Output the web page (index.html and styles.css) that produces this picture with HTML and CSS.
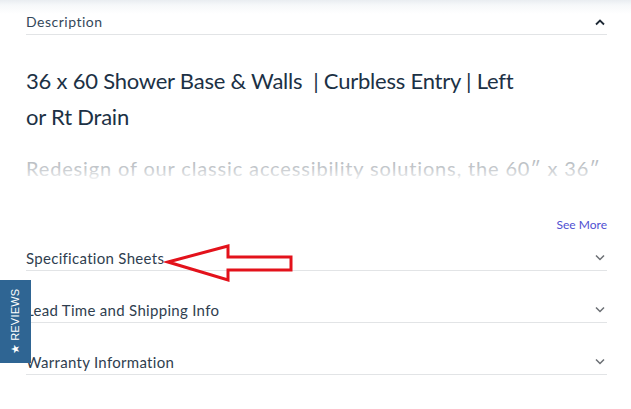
FILE: index.html
```html
<!DOCTYPE html>
<html lang="en">
<head>
<meta charset="utf-8">
<link rel="stylesheet" href="styles.css">
</head>
<body>
<div class="page">
  <div class="panel">
    <div class="desc-head">
      <span>Description</span>
      <svg class="chev chev-up" width="12" height="8" viewBox="0 0 12 8"><path d="M2 6.5 L6 2.5 L10 6.5" fill="none" stroke="#1f2a36" stroke-width="1.8"/></svg>
    </div>
    <h1 class="title">36 x 60 Shower Base &amp; Walls&nbsp; | Curbless Entry | Left or Rt Drain</h1>
    <div class="desc-body">
      <p>Redesign of our classic accessibility solutions, the 60″ x 36″ shower base with walls now features a curbless entry.</p>
    </div>
    <div class="see-more"><a href="#">See More</a></div>
    <div class="row row-first">
      <span>Specification Sheets</span>
      <svg class="chev" width="12" height="8" viewBox="0 0 12 8"><path d="M2 1.5 L6 5.5 L10 1.5" fill="none" stroke="#6b6f74" stroke-width="1.5"/></svg>
    </div>
    <div class="row">
      <span>Lead Time and Shipping Info</span>
      <svg class="chev" width="12" height="8" viewBox="0 0 12 8"><path d="M2 1.5 L6 5.5 L10 1.5" fill="none" stroke="#6b6f74" stroke-width="1.5"/></svg>
    </div>
    <div class="row">
      <span>Warranty Information</span>
      <svg class="chev" width="12" height="8" viewBox="0 0 12 8"><path d="M2 1.5 L6 5.5 L10 1.5" fill="none" stroke="#6b6f74" stroke-width="1.5"/></svg>
    </div>
    <div class="row row-faded">
      <span>Reviews</span>
    </div>
  </div>
  <svg class="annot" width="140" height="44" viewBox="0 0 140 44">
    <path d="M3 18 L63 2 L63 13 L126 13 L126 26 L63 26 L63 36 Z" fill="none" stroke="#e3121b" stroke-width="3" stroke-linejoin="miter"/>
  </svg>
  <div class="reviews-tab"><span>★ REVIEWS</span></div>
</div>
</body>
</html>
```
FILE: styles.css
```css
html, body {
  margin: 0;
  padding: 0;
  background: #fff;
  overflow: hidden;
}
body {
  font-family: "Lato", "Open Sans", sans-serif;
  color: #2c3a4a;
}
.page {
  position: relative;
  width: 631px;
  height: 409px;
  overflow: hidden;
  background: linear-gradient(#e9edf1 0px, #f6f8fa 5px, #ffffff 14px);
}
.panel {
  padding: 0 24px 0 26px;
}
.desc-head {
  display: flex;
  align-items: center;
  justify-content: space-between;
  padding-top: 9px;
  height: 25px;
  border-bottom: 1px solid #e2e4e6;
  font-size: 14px;
  letter-spacing: 0.5px;
  color: #34475a;
}
.chev {
  display: block;
  margin-right: 1px;
}
.title {
  margin: 28px 0 0;
  max-width: 495px;
  font-size: 22px;
  line-height: 36px;
  font-weight: 400;
  color: #1c3145;
  letter-spacing: -0.22px;
}
.desc-body {
  position: relative;
  margin-top: 18px;
  height: 42px;
  overflow: hidden;
}
.desc-body p {
  margin: 0;
  font-size: 20px;
  line-height: 30px;
  letter-spacing: 0.85px;
  color: #a4aab0;
  white-space: nowrap;
}
.desc-body::after {
  content: "";
  position: absolute;
  left: 0;
  right: 0;
  top: 0;
  bottom: 0;
  background: linear-gradient(rgba(255,255,255,0.1) 0px, rgba(255,255,255,0.35) 15px, #fff 30px);
}
.see-more {
  margin-top: 22px;
  text-align: right;
  line-height: 16px;
  font-size: 12px;
}
.see-more a {
  color: #5050d2;
  text-decoration: none;
}
.row {
  display: flex;
  align-items: center;
  justify-content: space-between;
  padding: 29px 0 2px;
  height: 20px;
  border-bottom: 1px solid #e2e4e6;
  font-size: 15px;
  letter-spacing: 0.3px;
  color: #2f3e4f;
}
.row-first {
  padding-top: 15px;
}
.row-faded {
  border-bottom: none;
  color: #b8bcc0;
  padding-top: 29px;
}
.annot {
  position: absolute;
  left: 165px;
  top: 244px;
  overflow: visible;
}
.reviews-tab {
  position: absolute;
  left: 0;
  top: 280px;
  width: 31px;
  height: 83px;
  background: #2f6593;
  display: flex;
  align-items: center;
  justify-content: center;
}
.reviews-tab span {
  transform: rotate(-90deg);
  white-space: nowrap;
  color: #fff;
  font-family: "Liberation Sans", Arial, sans-serif;
  font-size: 11px;
  letter-spacing: 0.2px;
}
```
